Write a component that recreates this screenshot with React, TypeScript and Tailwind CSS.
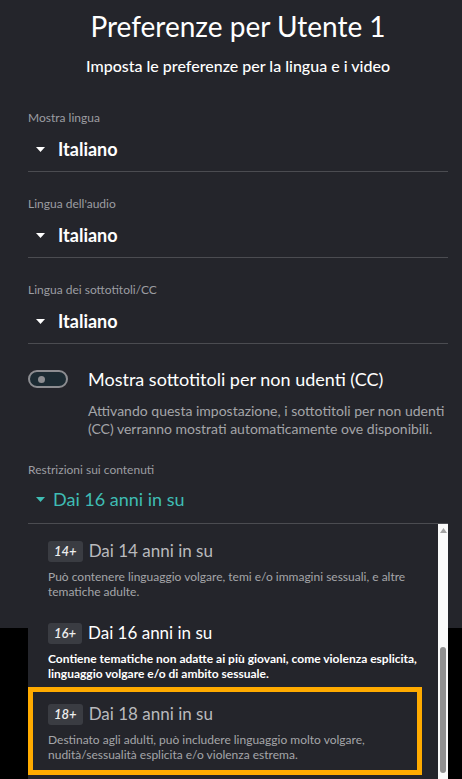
import React from 'react';

type Rating = {
  badge: string;
  title: string;
  desc: string;
  current?: boolean;
  focused?: boolean;
};

const RATINGS: Rating[] = [
  {
    badge: '14+',
    title: 'Dai 14 anni in su',
    desc: 'Può contenere linguaggio volgare, temi e/o immagini sessuali, e altre tematiche adulte.',
  },
  {
    badge: '16+',
    title: 'Dai 16 anni in su',
    desc: 'Contiene tematiche non adatte ai più giovani, come violenza esplicita, linguaggio volgare e/o di ambito sessuale.',
    current: true,
  },
  {
    badge: '18+',
    title: 'Dai 18 anni in su',
    desc: 'Destinato agli adulti, può includere linguaggio molto volgare, nudità/sessualità esplicita e/o violenza estrema.',
    focused: true,
  },
];

const Caret: React.FC<{ color?: string }> = ({ color = '#ffffff' }) => (
  <svg width="9" height="5" viewBox="0 0 9 5" className="shrink-0">
    <path d="M0 0 L9 0 L4.5 5 Z" fill={color} />
  </svg>
);

const Select: React.FC<{ label: string; value: string }> = ({ label, value }) => (
  <div>
    <div className="text-[12px] leading-[16px] text-[#9c9da2]">{label}</div>
    <div className="mt-[11px] flex items-center h-[24px] pl-[8px]">
      <Caret />
      <span className="ml-[13px] text-[18px] font-bold text-white leading-[24px]">{value}</span>
    </div>
    <div className="mt-[10px] h-px bg-[#4b4c51]" />
  </div>
);

const App: React.FC = () => {
  return (
    <div className="h-[779px] bg-black overflow-hidden" style={{ fontFamily: 'Lato, "Open Sans", sans-serif' }}>
      <div className="h-[628px] bg-[#24252b] pl-[28px] pr-[14px] pt-[9px]">
        <h1 className="text-center text-[28px] leading-[34px] text-white">Preferenze per Utente 1</h1>
        <p className="mt-[12px] text-center text-[16px] leading-[22px] font-medium text-white">
          Imposta le preferenze per la lingua e i video
        </p>

        <div className="mt-[33px] space-y-[24px]">
          <Select label="Mostra lingua" value="Italiano" />
          <Select label="Lingua dell'audio" value="Italiano" />
          <Select label="Lingua dei sottotitoli/CC" value="Italiano" />
        </div>

        <div className="mt-[23px] flex">
          <div className="w-[40px] h-[18px] mt-[3px] rounded-full border-2 border-[#8c8d91] bg-[#1c2b33] flex items-center pl-[8px] shrink-0">
            <div className="w-[7px] h-[7px] rounded-full bg-[#8c8d91]" />
          </div>
          <div className="ml-[20px]">
            <div className="text-[18px] leading-[24px] text-white">Mostra sottotitoli per non udenti (CC)</div>
            <p className="mt-[11px] text-[14px] leading-[18px] text-[#a4a5a9]">
              Attivando questa impostazione, i sottotitoli per non udenti (CC) verranno mostrati automaticamente ove disponibili.
            </p>
          </div>
        </div>

        <div className="mt-[24px] relative">
          <div className="text-[12px] leading-[16px] text-[#9c9da2]">Restrizioni sui contenuti</div>
          <div className="mt-[9px] flex items-center h-[24px] pl-[8px]">
            <Caret color="#3fbdb4" />
            <span className="ml-[8px] text-[18px] leading-[24px] text-[#3fbdb4]">Dai 16 anni in su</span>
          </div>
          <div className="mt-[12px] h-px bg-[#4b4c51]" />

          {/* dropdown menu */}
          <div className="absolute left-0 right-0 top-full h-[260px] bg-[#24252b] flex overflow-hidden">
            <div className="flex-1 pt-[1px]">
              {RATINGS.map((r) => (
                <div
                  key={r.badge}
                  className={
                    r.focused
                      ? 'h-[88px] -mt-[2px] mr-[16px] border-[5px] border-[#ffab00] pl-[15px] pt-[10px]'
                      : 'h-[82px] pl-[20px] pt-[14px]'
                  }
                >
                  <div className="flex items-center h-[24px]">
                    <span className="h-[21px] px-[6px] rounded-[3px] bg-[#3a3c42] text-[13px] leading-[21px] italic font-semibold text-[#eeeeee]">
                      {r.badge}
                    </span>
                    <span className={`ml-[6px] text-[17px] leading-[24px] ${r.current ? 'text-white' : 'text-[#b9babd]'}`}>
                      {r.title}
                    </span>
                  </div>
                  <p
                    className={`mt-[6px] pr-[8px] text-[12px] leading-[15px] ${
                      r.current ? 'text-white font-bold' : 'text-[#a4a5a9]'
                    }`}
                  >
                    {r.desc}
                  </p>
                </div>
              ))}
            </div>
            {/* scrollbar */}
            <div className="w-[10px] bg-[#fafafa] flex flex-col items-center">
              <svg width="7" height="5" viewBox="0 0 7 5" className="mt-[4px]">
                <path d="M0 5 L3.5 0 L7 5 Z" fill="#a3a3a3" />
              </svg>
              <div className="mt-[114px] w-[6px] h-[126px] rounded-full bg-[#909090]" />
            </div>
          </div>
        </div>
      </div>
    </div>
  );
};

export default App;
